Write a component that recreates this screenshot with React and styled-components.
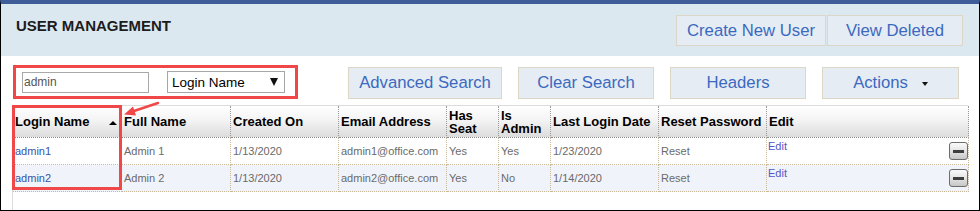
import React from "react";
import styled, { createGlobalStyle } from "styled-components";

const Global = createGlobalStyle`
  html, body { margin: 0; padding: 0; background: #fff; }
  * { box-sizing: border-box; }
`;

const Frame = styled.div`
  position: relative;
  width: 980px;
  height: 211px;
  border: 1px solid #000;
  border-top: 4px solid #3e5d99;
  background: #fff;
  display: flex;
  flex-direction: column;
  font-family: "Liberation Sans", Arial, sans-serif;
  overflow: hidden;
`;

const HeaderBand = styled.div`
  height: 52px;
  flex: none;
  background: #dce8f0;
  display: flex;
  justify-content: space-between;
  align-items: flex-start;
  padding: 0 16px 0 15px;
`;

const Title = styled.h1`
  margin: 13px 0 0;
  font-size: 15px;
  line-height: 17px;
  font-weight: bold;
  color: #1c1c1c;
`;

const TopButtons = styled.div`
  margin-top: 11px;
  display: flex;
  gap: 1px;
`;

const Button = styled.button`
  width: ${(p) => p.$w}px;
  height: ${(p) => p.$h || 32}px;
  background: #e5ecf4;
  border: 1px solid #dcd6c6;
  border-radius: 0;
  color: #3b69bf;
  font-family: "Liberation Sans", Arial, sans-serif;
  font-size: 16.7px;
  padding: 0;
  display: flex;
  align-items: center;
  justify-content: center;
  gap: 14px;
  cursor: pointer;
`;

const Caret = styled.span`
  width: 0;
  height: 0;
  border-left: 3.5px solid transparent;
  border-right: 3.5px solid transparent;
  border-top: 4px solid #111;
  margin-top: 2px;
`;

const SearchRow = styled.div`
  height: 49px;
  flex: none;
  display: flex;
  align-items: flex-start;
  padding: 9px 20px 0 12px;
`;

const SearchBox = styled.div`
  width: 285px;
  height: 34px;
  border: 3px solid #f04848;
  display: flex;
  align-items: center;
  padding-left: 6px;
`;

const TextInput = styled.input`
  width: 127px;
  height: 21px;
  border: 1px solid #a9a9a9;
  padding: 0 1px;
  margin: 0 18px 0 0;
  font-family: "Liberation Sans", Arial, sans-serif;
  font-size: 12px;
  color: #555;
  outline: none;
`;

const Select = styled.div`
  width: 118px;
  height: 22px;
  border: 1px solid #a6a6a6;
  display: flex;
  align-items: center;
  justify-content: space-between;
  padding: 0 6px 0 4px;
  font-size: 13.5px;
  color: #000;
  background: #fff;
`;

const SelectArrow = styled.span`
  width: 0;
  height: 0;
  border-left: 4px solid transparent;
  border-right: 4px solid transparent;
  border-top: 8px solid #111;
`;

const SearchButtons = styled.div`
  display: flex;
  gap: 16px;
  margin: 2px 0 0 50px;
`;

const TableArea = styled.div`
  position: relative;
  flex: 1;
  margin: 0 11px;
  border-left: 1px solid #dcdcdc;
  border-top: 1px solid #dcdcdc;
`;

const Grid = styled.div`
  display: grid;
  grid-template-columns: 109px 109px 108px 108px 52px 52px 108px 108px 202px;
`;

const HeadCell = styled.div`
  height: 32px;
  background: linear-gradient(to bottom, #ffffff 0%, #f4f4f4 45%, #dcdcdc 100%);
  border-right: 1px dotted #9a9a9a;
  border-bottom: 1px dotted #8a8a8a;
  display: flex;
  align-items: center;
  justify-content: space-between;
  padding: 0 4px 0 2px;
  font-size: 13px;
  line-height: 13px;
  font-weight: bold;
  color: #000;
`;

const SortUp = styled.span`
  width: 0;
  height: 0;
  border-left: 4px solid transparent;
  border-right: 4px solid transparent;
  border-bottom: 4px solid #000;
  margin-top: 3px;
`;

const Cell = styled.div`
  height: 27px;
  background: ${(p) => (p.$alt ? "#f0f4fa" : "#fff")};
  border-right: 1px dotted #c8b896;
  border-bottom: 1px dotted #c8b896;
  display: flex;
  align-items: center;
  padding-left: 2px;
  font-size: 11px;
  line-height: 13px;
  color: ${(p) => (p.$link ? "#3753a8" : "#6a6a6a")};
`;

const EditCell = styled(Cell)`
  justify-content: space-between;
  padding-left: 1px;
`;

const EditLink = styled.a`
  align-self: flex-start;
  margin-top: 2px;
  font-size: 11px;
  color: #5256c4;
  text-decoration: none;
`;

const MinusButton = styled.span`
  width: 19px;
  height: 18px;
  border: 1.5px solid #6c6c6c;
  border-radius: 3px;
  background: linear-gradient(to bottom, #fafafa 0%, #e4e4e4 50%, #c6c6c6 100%);
  display: flex;
  align-items: center;
  justify-content: center;
  &::after {
    content: "";
    width: 11px;
    height: 3px;
    background: #3e3e3e;
  }
`;

const ColumnHighlight = styled.div`
  position: absolute;
  left: -1px;
  top: -1px;
  width: 110px;
  height: 85px;
  border: 3px solid #f04848;
  pointer-events: none;
`;

const Pointer = styled.svg`
  position: absolute;
  left: 118px;
  top: 96px;
  overflow: visible;
  pointer-events: none;
`;

const headers = [
  "Login Name",
  "Full Name",
  "Created On",
  "Email Address",
  "Has Seat",
  "Is Admin",
  "Last Login Date",
  "Reset Password",
  "Edit",
];

const rows = [
  ["admin1", "Admin 1", "1/13/2020", "admin1@office.com", "Yes", "Yes", "1/23/2020", "Reset"],
  ["admin2", "Admin 2", "1/13/2020", "admin2@office.com", "Yes", "No", "1/14/2020", "Reset"],
];

export default function App() {
  return (
    <>
      <Global />
      <Frame>
        <HeaderBand>
          <Title>USER MANAGEMENT</Title>
          <TopButtons>
            <Button $w={150} $h={31}>Create New User</Button>
            <Button $w={136} $h={31}>View Deleted</Button>
          </TopButtons>
        </HeaderBand>
        <SearchRow>
          <SearchBox>
            <TextInput readOnly defaultValue="admin" />
            <Select>
              <span>Login Name</span>
              <SelectArrow />
            </Select>
          </SearchBox>
          <SearchButtons>
            <Button $w={154}>Advanced Search</Button>
            <Button $w={136}>Clear Search</Button>
            <Button $w={136}>Headers</Button>
            <Button $w={137}>
              Actions
              <Caret />
            </Button>
          </SearchButtons>
        </SearchRow>
        <TableArea>
          <Grid>
            {headers.map((h, i) => (
              <HeadCell key={h}>
                <span>{h}</span>
                {i === 0 && <SortUp />}
              </HeadCell>
            ))}
            {rows.map((r, ri) => (
              <React.Fragment key={r[0]}>
                {r.map((v, ci) => (
                  <Cell key={ci} $alt={ri === 1} $link={ci === 0}>
                    {v}
                  </Cell>
                ))}
                <EditCell $alt={ri === 1}>
                  <EditLink href="#">Edit</EditLink>
                  <MinusButton />
                </EditCell>
              </React.Fragment>
            ))}
          </Grid>
          <ColumnHighlight />
        </TableArea>
        <Pointer width="42" height="22" viewBox="0 0 42 22">
          <line x1="39" y1="3" x2="12" y2="12" stroke="#f04848" strokeWidth="2.5" strokeLinecap="round" />
          <polygon points="5,14.5 14,6.5 17,15.5" fill="#f04848" />
        </Pointer>
      </Frame>
    </>
  );
}
